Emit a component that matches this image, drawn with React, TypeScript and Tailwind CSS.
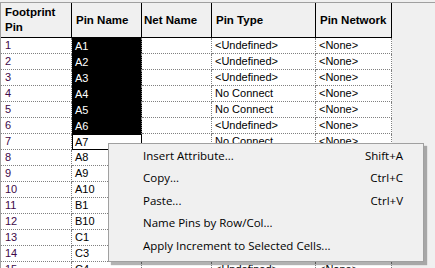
import React from "react";

const rows: [string, string, string, string][] = [
  ["1", "A1", "<Undefined>", "<None>"],
  ["2", "A2", "<Undefined>", "<None>"],
  ["3", "A3", "<Undefined>", "<None>"],
  ["4", "A4", "No Connect", "<None>"],
  ["5", "A5", "No Connect", "<None>"],
  ["6", "A6", "<Undefined>", "<None>"],
  ["7", "A7", "No Connect", "<None>"],
  ["8", "A8", "", ""],
  ["9", "A9", "", ""],
  ["10", "A10", "", ""],
  ["11", "B1", "", ""],
  ["12", "B10", "", ""],
  ["13", "C1", "", ""],
  ["14", "C3", "", ""],
  ["15", "C4", "<Undefined>", "<None>"],
];

const menu: [string, string][] = [
  ["Insert Attribute...", "Shift+A"],
  ["Copy...", "Ctrl+C"],
  ["Paste...", "Ctrl+V"],
  ["Name Pins by Row/Col...", ""],
  ["Apply Increment to Selected Cells...", ""],
];

export default function App() {
  return (
    <div className="relative w-[435px] h-[268px] overflow-hidden bg-[#f0f0f0] pt-[2px]">
      <div
        className="h-full border-t border-l border-[#a0a0a0] flex flex-col"
        style={{ fontFamily: '"Liberation Sans", Arial, sans-serif' }}
      >
        {/* header */}
        <div className="flex h-[35px] text-[11.5px] font-bold text-black leading-[15px] shrink-0">
          <div className="w-[71px] border-r border-b border-black px-[4px] pt-[2px] flex flex-col">
            <span>Footprint</span>
            <span>Pin</span>
          </div>
          <div className="w-[70px] border-r border-b border-black px-[4px] flex items-center">Pin Name</div>
          <div className="w-[70px] border-r border-b border-black px-[2px] flex items-center">Net Name</div>
          <div className="w-[104px] border-r border-b border-black px-[4px] flex items-center">Pin Type</div>
          <div className="w-[76px] border-r border-b border-black px-[4px] flex items-center">Pin Network</div>
        </div>
        {/* body */}
        <div className="flex flex-col text-[11px] text-black">
          {rows.map(([n, name, type, net], i) => {
            const sel = i < 6;
            const focus = i === 6;
            return (
              <div key={n} className="flex h-[16px] shrink-0">
                <div className="w-[71px] bg-white border-r border-b border-dotted border-[#808080] pl-[4px] leading-[15px] text-[#400848]">
                  {n}
                </div>
                <div
                  className={
                    sel
                      ? "w-[70px] bg-black text-white border-r border-dotted border-[#808080] pl-[3px] leading-[16px]"
                      : focus
                      ? "w-[70px] bg-white border border-black pl-[2px] leading-[14px]"
                      : "w-[70px] bg-white border-r border-b border-dotted border-[#808080] pl-[3px] leading-[15px]"
                  }
                >
                  {name}
                </div>
                <div className="w-[70px] bg-white border-r border-b border-dotted border-[#808080]" />
                <div className="w-[104px] bg-white border-r border-b border-dotted border-[#808080] pl-[3px] leading-[15px]">
                  {type}
                </div>
                <div className="w-[76px] bg-white border-r border-b border-dotted border-[#808080] pl-[3px] leading-[15px]">
                  {net}
                </div>
              </div>
            );
          })}
        </div>
      </div>

      {/* context menu */}
      <div
        className="absolute left-[108px] top-[143px] w-[316px] h-[119px] bg-[#f0f0f0] border border-[#a0a0a0] shadow-[3px_3px_1px_rgba(0,0,0,0.3)] flex flex-col"
        style={{ fontFamily: '"Open Sans", "Noto Sans", sans-serif' }}
      >
        {menu.map(([label, key]) => (
          <div key={label} className="h-[22.5px] flex items-center justify-between pl-[34px] pr-[20px] text-[11.5px] text-black">
            <span>{label}</span>
            <span>{key}</span>
          </div>
        ))}
      </div>
    </div>
  );
}
